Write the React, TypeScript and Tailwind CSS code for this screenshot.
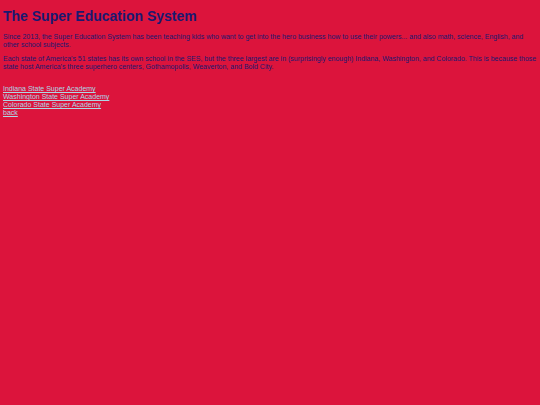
import React from 'react';

const schools = [
  { name: 'Indiana State Super Academy', href: '#indiana' },
  { name: 'Washington State Super Academy', href: '#washington' },
  { name: 'Colorado State Super Academy', href: '#colorado' },
];

const linkClass = 'underline text-[#add8e6]';

export default function App() {
  return (
    <div className="min-h-screen bg-[#dc143c] text-[#191970] px-[3px] pt-2 font-['Liberation_Sans',Arial,sans-serif] text-[7px] leading-[8px]">
      <h1 className="text-[14px] leading-4 font-bold">The Super Education System</h1>
      <p className="mt-[9px]">
        Since 2013, the Super Education System has been teaching kids who want to get into the hero business how to use their powers... and also math, science, English, and other school subjects.
      </p>
      <p className="mt-[6px]">
        Each state of America's 51 states has its own school in the SES, but the three largest are in (surprisingly enough) Indiana, Washington, and Colorado. This is because those state host America's three superhero centers, Gothamopolis, Weaverton, and Bold City.
      </p>
      <nav className="mt-[14px] flex flex-col items-start">
        {schools.map(school => (
          <a key={school.href} href={school.href} className={linkClass}>{school.name}</a>
        ))}
        <a href="#back" className={linkClass}>back</a>
      </nav>
    </div>
  );
}
